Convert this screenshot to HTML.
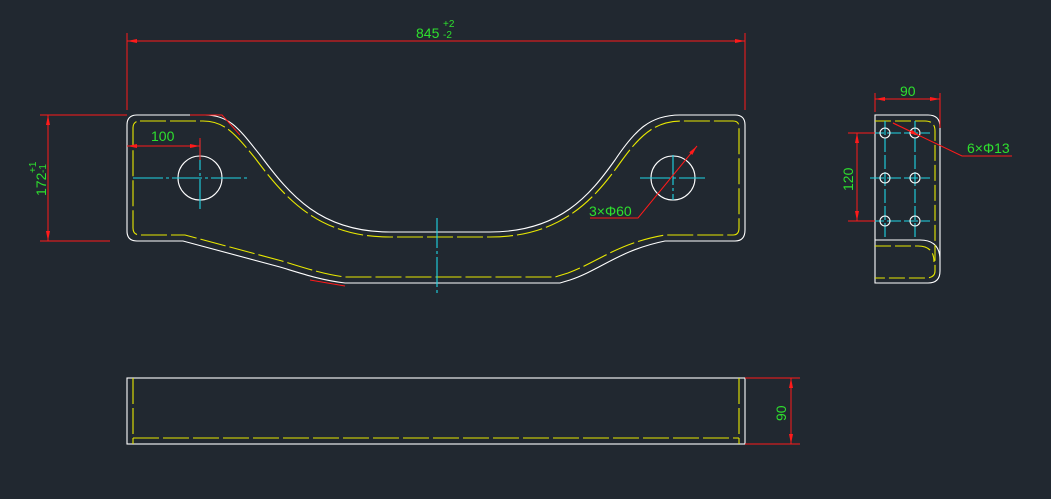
<!DOCTYPE html>
<html><head><meta charset="utf-8"><style>
html,body{margin:0;padding:0;background:#212830;width:1051px;height:499px;overflow:hidden}
svg{display:block}
text{font-family:"Liberation Sans Narrow","Liberation Sans",sans-serif;fill:#2ee02e}
</style></head><body>
<svg width="1051" height="499" viewBox="0 0 1051 499">
<defs>
<marker id="a" viewBox="0 0 10 4" refX="10" refY="2" markerWidth="10" markerHeight="4" orient="auto-start-reverse" markerUnits="userSpaceOnUse"><path d="M0,0L10,2L0,4z" fill="#ff1a1a"/></marker>
</defs>
<g fill="none" stroke-width="1.1">
<path stroke="#fff" d="M137,115 H205 C230,115 240,130 260,155 C290,195 320,232 390,232 H490 C560,232 590,195 615,160 C635,130 650,115 680,115 H735 Q745,115 745,125 V230 Q745,241 735,241 H665 C620,250 600,270 570,280 L560,283 H345 C320,280 300,273 280,267 L183,241 H137 Q127,241 127,231 V125 Q127,115 137,115 Z"/>
<path stroke="#e8e800" stroke-dasharray="26,4" d="M140,121 H203 C225,121 236,135 255,158 C285,198 318,237 390,237 H490 C562,237 595,198 620,163 C640,135 655,121 682,121 H733 Q739,121 739,127 V228 Q739,235 733,235 H665 C618,243 598,262 568,273 L555,277 H345 C322,274 302,267 282,261 L185,235 H140 Q133,235 133,228 V128 Q133,121 140,121 Z"/>
<circle cx="200" cy="178" r="22" stroke="#fff"/>
<circle cx="673" cy="178" r="22" stroke="#fff"/>
<g stroke="#1ed6e6">
<path d="M133,178 H250 M200,140 V210 M640,178 H705 M673,155 V200 M437,218 V296" stroke-dasharray="30,3,3,3"/>
</g>
<g stroke="#ff1a1a" stroke-width="1">
<path d="M127,33 V110 M745,33 V110"/>
<path d="M127,41 H745" marker-start="url(#a)" marker-end="url(#a)"/>
<path d="M40,115 H127 M40,241 H110"/>
<path d="M48,115 V241" marker-start="url(#a)" marker-end="url(#a)"/>
<path d="M127,146 H200" marker-start="url(#a)" marker-end="url(#a)"/>
<path d="M200,138 V160 M190,115 H222 L240,135"/>
<path d="M697,146 L638,218 H590" marker-start="url(#a)"/>
<path d="M310,280 L345,286"/>
</g>
<rect x="127" y="378" width="618" height="66" stroke="#fff"/>
<path stroke="#e8e800" stroke-dasharray="26,4" d="M133,378 V444 M739,378 V444 M133,438 H739"/>
<g stroke="#ff1a1a" stroke-width="1">
<path d="M745,378 H800 M745,444 H800"/>
<path d="M791,378 V444" marker-start="url(#a)" marker-end="url(#a)"/>
</g>
<path stroke="#fff" d="M875,115 H928 Q940,115 940,127 V271 Q940,283 928,283 H875 Z M875,240 H920 Q940,240 940,260"/>
<path stroke="#e8e800" stroke-dasharray="16,4" d="M875,121 H925 Q935,121 935,131 V271 Q935,278 925,278 H875 M875,246 H918 Q934,246 934,262"/>
<g stroke="#1ed6e6" stroke-dasharray="14,3">
<path d="M870,133 H930 M870,178 H930 M870,221 H930 M885,121 V240 M915,121 V240"/>
</g>
<g stroke="#fff"><circle cx="885" cy="133" r="5"/><circle cx="915" cy="133" r="5"/><circle cx="885" cy="178" r="5"/><circle cx="915" cy="178" r="5"/><circle cx="885" cy="221" r="5"/><circle cx="915" cy="221" r="5"/></g>
<g stroke="#ff1a1a" stroke-width="1">
<path d="M875,93 V112 M940,93 V128"/>
<path d="M875,99 H940" marker-start="url(#a)" marker-end="url(#a)"/>
<path d="M848,133 H875 M848,221 H875"/>
<path d="M857,133 V221" marker-start="url(#a)" marker-end="url(#a)"/>
<path d="M893,123 L962,156 H1012" />
<path d="M920,136 L893,123" marker-start="url(#a)"/>
</g>
</g>
<g font-size="14">
<text x="416" y="38">845</text>
<text x="443" y="27" font-size="10">+2</text>
<text x="443" y="38" font-size="10">-2</text>
<text x="151" y="141">100</text>
<text x="589" y="216">3×Φ60</text>
<text x="900" y="96">90</text>
<text x="967" y="153">6×Φ13</text>
<text transform="translate(46,196) rotate(-90)">172</text>
<text transform="translate(36,173) rotate(-90)" font-size="10">+1</text>
<text transform="translate(46,173) rotate(-90)" font-size="10">-1</text>
<text transform="translate(853,191) rotate(-90)">120</text>
<text transform="translate(786,421) rotate(-90)">90</text>
</g>
</svg>
</body></html>
